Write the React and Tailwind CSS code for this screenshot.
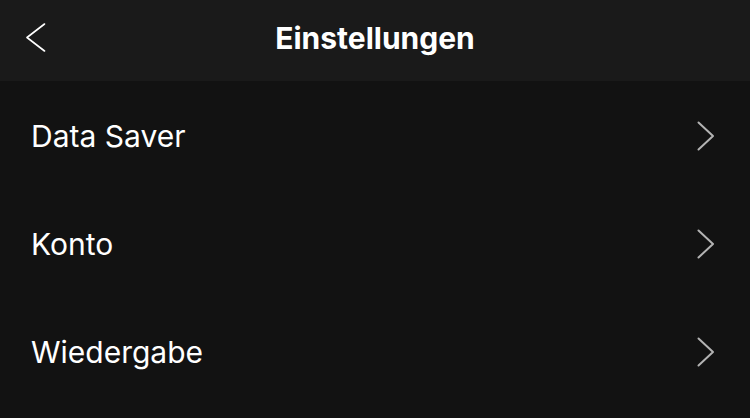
import React from 'react';

const items = ['Data Saver', 'Konto', 'Wiedergabe'];

function ChevronRight() {
  return (
    <svg width="18" height="30" viewBox="0 0 18 30" fill="none" className="shrink-0">
      <path d="M1.5 1.5 L16 15 L1.5 28.5" stroke="#b3b3b3" strokeWidth="2" strokeLinecap="round" strokeLinejoin="round" />
    </svg>
  );
}

function ChevronLeft() {
  return (
    <svg width="20" height="30" viewBox="0 0 20 30" fill="none">
      <path d="M18.5 1 L1 14.5 L18.5 28" stroke="#ffffff" strokeWidth="1.6" strokeLinecap="round" strokeLinejoin="round" />
    </svg>
  );
}

export default function App() {
  return (
    <div className="w-[750px] h-[418px] overflow-hidden bg-[#121212] font-['Inter','Liberation_Sans',Arial,sans-serif] text-white">
      {/* Header */}
      <header className="relative h-[81px] bg-[#1a1a1a] flex items-center justify-center">
        <button className="absolute left-[26px] top-[23px]">
          <ChevronLeft />
        </button>
        <h1 className="text-[30px] font-bold pb-1">Einstellungen</h1>
      </header>

      {/* Einträge */}
      <ul className="pt-px">
        {items.map((item) => (
          <li key={item} className="h-[108px] flex items-center justify-between pl-[31px] pr-[35px]">
            <span className="text-[30px]">{item}</span>
            <ChevronRight />
          </li>
        ))}
      </ul>
    </div>
  );
}
